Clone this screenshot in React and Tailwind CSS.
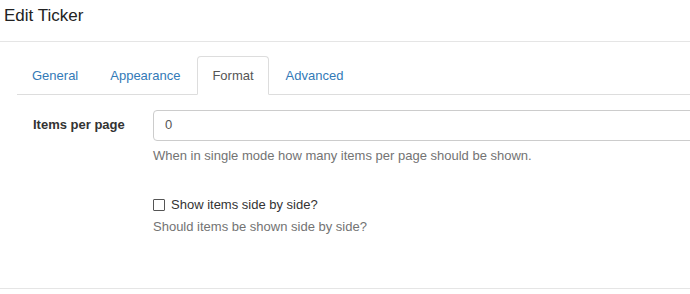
import React, { useState } from "react";

const tabs = ["General", "Appearance", "Format", "Advanced"];

const TabBar = ({ active, onSelect }) => (
  <ul className="flex border-b border-[#ddd] ml-[17px] w-[760px]">
    {tabs.map((tab) => (
      <li key={tab} className="mr-[2px] -mb-px">
        <button
          type="button"
          onClick={() => onSelect(tab)}
          className={
            tab === active
              ? "block h-[39px] px-[14px] pt-[9px] pb-[9px] text-[13px] leading-[18px] text-[#555] bg-white border border-[#ddd] border-b-transparent rounded-t-[4px]"
              : "block h-[39px] px-[14px] pt-[9px] pb-[9px] text-[13px] leading-[18px] text-[#337ab7] border border-transparent"
          }
        >
          {tab}
        </button>
      </li>
    ))}
  </ul>
);

export default function App() {
  const [active, setActive] = useState("Format");
  const [perPage, setPerPage] = useState("0");
  const [sideBySide, setSideBySide] = useState(false);

  return (
    <div className="w-[690px] h-[294px] overflow-hidden bg-white font-['Liberation_Sans',Arial,sans-serif] text-[#333]">
      <div className="h-[42px] border-b border-[#e5e5e5] pl-[4px] pt-[6px]">
        <h4 className="text-[17px] leading-[20px] text-[#222]">Edit Ticker</h4>
      </div>

      <div className="h-[247px] border-b border-[#e5e5e5] pt-[14px]">
        <TabBar active={active} onSelect={setActive} />

        <div className="pt-[15px] pl-[33px]">
          <div className="flex">
            <label className="w-[120px] shrink-0 pt-[6px] text-[13px] leading-[18px] font-bold text-[#333]">
              Items per page
            </label>
            <div className="flex-1">
              <input
                value={perPage}
                onChange={(e) => setPerPage(e.target.value)}
                className="block w-[700px] h-[31px] px-[11px] pb-[2px] text-[13px] text-[#555] border border-[#ccc] rounded-[4px] outline-none"
              />
              <p className="mt-[6px] text-[13px] leading-[18px] text-[#737373]">
                When in single mode how many items per page should be shown.
              </p>
            </div>
          </div>

          <div className="pl-[120px] mt-[31px]">
            <label className="flex items-center gap-[6px] text-[13px] leading-[18px] text-[#333]">
              <input
                type="checkbox"
                checked={sideBySide}
                onChange={(e) => setSideBySide(e.target.checked)}
                className="appearance-none w-[12px] h-[12px] border border-[#555] rounded-[1px] bg-white m-0"
              />
              Show items side by side?
            </label>
            <p className="mt-[4px] text-[13px] leading-[18px] text-[#737373]">
              Should items be shown side by side?
            </p>
          </div>
        </div>
      </div>
    </div>
  );
}
